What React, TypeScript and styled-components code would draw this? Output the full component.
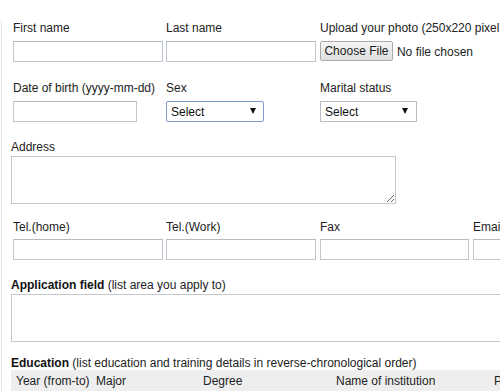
import React from "react";
import styled, { createGlobalStyle } from "styled-components";

const GlobalStyle = createGlobalStyle`
  html, body {
    margin: 0;
    padding: 0;
    background: #ffffff;
    overflow: hidden;
  }
  body {
    font-family: "Liberation Sans", Arial, sans-serif;
    font-size: 12px;
    color: #222222;
  }
  * { box-sizing: border-box; }
`;

const Page = styled.div`
  margin-left: 1px;
  width: 760px;
  min-height: 391px;
  border-left: 1px solid #e3e3e3;
  padding-left: 9px;
`;

const FieldGrid = styled.div<{ $top: number; $rowGap?: number }>`
  display: grid;
  grid-template-columns: 153px 154px 153px 153px;
  row-gap: ${(p) => p.$rowGap ?? 0}px;
  margin-left: 2px;
  margin-top: ${(p) => p.$top}px;
`;

const Field = styled.div`
  display: flex;
  flex-direction: column;
  min-width: 0;
`;

const Label = styled.label<{ $gap?: number }>`
  display: block;
  line-height: 14px;
  height: 14px;
  white-space: nowrap;
  color: #222;
  margin-bottom: ${(p) => p.$gap ?? 6}px;
`;

const TextInput = styled.input<{ $w?: number }>`
  width: ${(p) => p.$w ?? 150}px;
  height: 21px;
  border: 1px solid #bfc6cd;
  border-top-color: #b3bbc3;
  background: #fff;
  padding: 0 3px;
  font: inherit;
  outline: none;
`;

const FileRow = styled.div`
  display: flex;
  align-items: center;
  gap: 4px;
  height: 21px;
  white-space: nowrap;
`;

const FileButton = styled.button`
  height: 20px;
  width: 77px;
  padding: 0;
  border: 1px solid #aaaaaa;
  border-radius: 2px;
  background: linear-gradient(#f6f6f6, #dedede);
  font: inherit;
  color: #222;
  margin-top: -1px;
`;

const SelectWrap = styled.div<{ $w: number }>`
  position: relative;
  width: ${(p) => p.$w}px;
  height: 21px;
`;

const Select = styled.select<{ $focus?: boolean }>`
  appearance: none;
  -webkit-appearance: none;
  width: 100%;
  height: 100%;
  border: 1px solid ${(p) => (p.$focus ? "#7f9dcb" : "#b9bfc5")};
  border-radius: ${(p) => (p.$focus ? 2 : 0)}px;
  background: #fff;
  font: inherit;
  color: #111;
  padding: 0 0 0 4px;
  outline: none;
`;

const Arrow = styled.span<{ $right: number }>`
  position: absolute;
  top: 7px;
  right: ${(p) => p.$right}px;
  width: 0;
  height: 0;
  border-left: 3px solid transparent;
  border-right: 3px solid transparent;
  border-top: 6px solid #111;
  pointer-events: none;
`;

const Block = styled.div<{ $top: number }>`
  margin-top: ${(p) => p.$top}px;
`;

const BlockLabel = styled.div`
  line-height: 14px;
  height: 14px;
  margin-bottom: 2px;
  white-space: nowrap;
  color: #222;
`;

const Strong = styled.b`
  font-weight: bold;
  color: #111;
`;

const TextArea = styled.textarea<{ $w: number }>`
  display: block;
  width: ${(p) => p.$w}px;
  height: 48px;
  border: 1px solid #c3c8cd;
  background: #fff;
  font: inherit;
  padding: 2px;
  outline: none;
`;

const TableHead = styled.div`
  display: grid;
  grid-template-columns: 80px 107px 133px 158px 140px;
  width: 618px;
  background: #eeeeee;
  height: 24px;
  padding-top: 4px;
`;

const HeadCell = styled.div`
  padding-left: 5px;
  line-height: 14px;
  white-space: nowrap;
  color: #222;
`;

export default function App() {
  return (
    <>
      <GlobalStyle />
      <Page>
        <FieldGrid $top={21} $rowGap={19}>
          <Field>
            <Label>First name</Label>
            <TextInput />
          </Field>
          <Field>
            <Label>Last name</Label>
            <TextInput />
          </Field>
          <Field>
            <Label>Upload your photo (250x220 pixels)</Label>
            <FileRow>
              <FileButton type="button">Choose File</FileButton>
              <span>No file chosen</span>
            </FileRow>
          </Field>
          <div />
          <Field>
            <Label>Date of birth (yyyy-mm-dd)</Label>
            <TextInput $w={124} />
          </Field>
          <Field>
            <Label>Sex</Label>
            <SelectWrap $w={98}>
              <Select $focus defaultValue="">
                <option value="">Select</option>
                <option>Male</option>
                <option>Female</option>
              </Select>
              <Arrow $right={8} />
            </SelectWrap>
          </Field>
          <Field>
            <Label>Marital status</Label>
            <SelectWrap $w={97}>
              <Select defaultValue="">
                <option value="">Select</option>
                <option>Single</option>
                <option>Married</option>
              </Select>
              <Arrow $right={9} />
            </SelectWrap>
          </Field>
          <div />
        </FieldGrid>

        <Block $top={18}>
          <BlockLabel>Address</BlockLabel>
          <TextArea $w={385} />
        </Block>

        <FieldGrid $top={16}>
          <Field>
            <Label $gap={5}>Tel.(home)</Label>
            <TextInput />
          </Field>
          <Field>
            <Label $gap={5}>Tel.(Work)</Label>
            <TextInput />
          </Field>
          <Field>
            <Label $gap={5}>Fax</Label>
            <TextInput $w={149} />
          </Field>
          <Field>
            <Label $gap={5}>Email</Label>
            <TextInput />
          </Field>
        </FieldGrid>

        <Block $top={18}>
          <BlockLabel>
            <Strong>Application field</Strong> (list area you apply to)
          </BlockLabel>
          <TextArea $w={620} />
        </Block>

        <Block $top={14}>
          <BlockLabel as="div" style={{ marginBottom: 0 }}>
            <Strong>Education</Strong> (list education and training details in reverse-chronological order)
          </BlockLabel>
          <TableHead>
            <HeadCell>Year (from-to)</HeadCell>
            <HeadCell>Major</HeadCell>
            <HeadCell>Degree</HeadCell>
            <HeadCell>Name of institution</HeadCell>
            <HeadCell>Place</HeadCell>
          </TableHead>
        </Block>
      </Page>
    </>
  );
}
